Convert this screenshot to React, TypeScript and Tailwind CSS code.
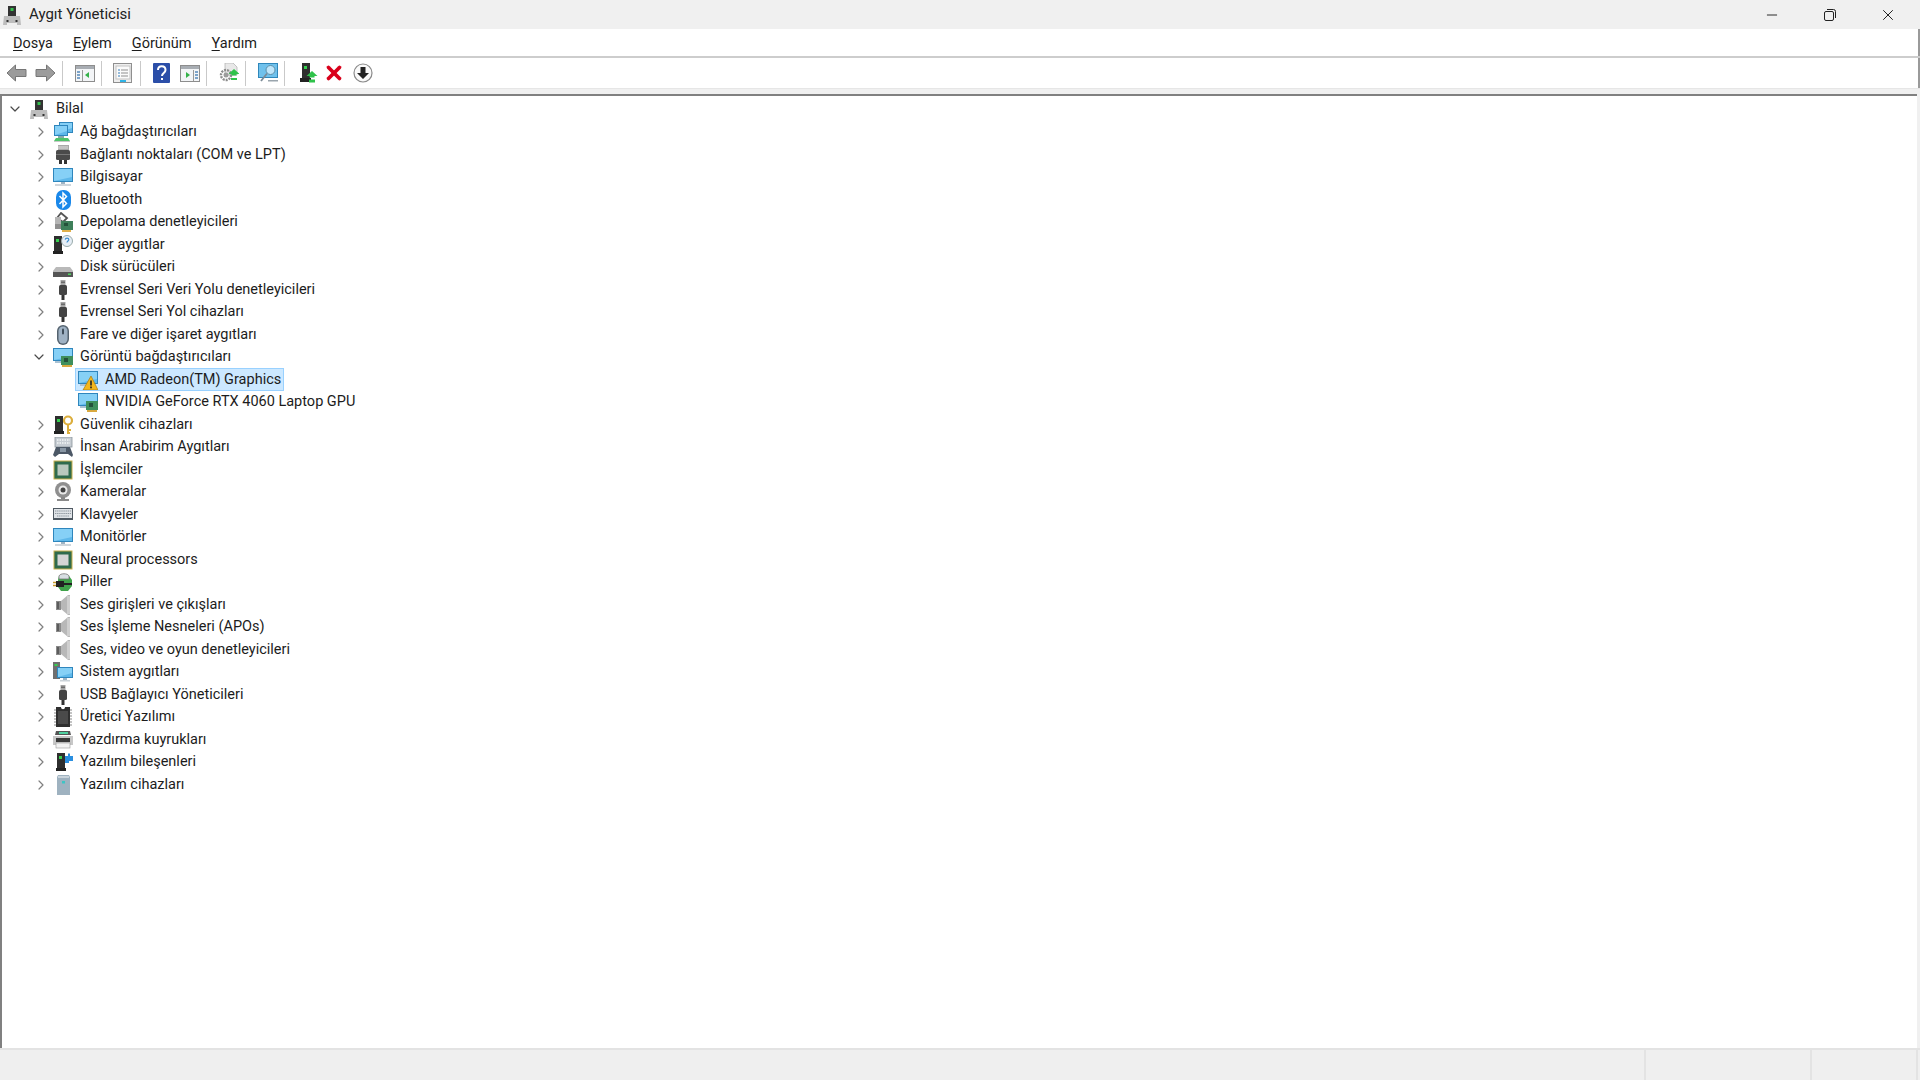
import React from 'react';
import { ChevronDown, ChevronRight, Minus, X } from 'lucide-react';

type Kind =
  | 'pc' | 'network' | 'port' | 'monitor' | 'bluetooth' | 'storage' | 'other' | 'disk' | 'usb' | 'mouse'
  | 'display' | 'displayWarn' | 'security' | 'hid' | 'cpu' | 'camera' | 'keyboard' | 'neural' | 'battery'
  | 'speaker' | 'system' | 'firmware' | 'printer' | 'softComp' | 'softDev';

type Row = { label: string; icon: Kind; open?: boolean; child?: boolean; selected?: boolean };

const rows: Row[] = [
  { label: 'Ağ bağdaştırıcıları', icon: 'network' },
  { label: 'Bağlantı noktaları (COM ve LPT)', icon: 'port' },
  { label: 'Bilgisayar', icon: 'monitor' },
  { label: 'Bluetooth', icon: 'bluetooth' },
  { label: 'Depolama denetleyicileri', icon: 'storage' },
  { label: 'Diğer aygıtlar', icon: 'other' },
  { label: 'Disk sürücüleri', icon: 'disk' },
  { label: 'Evrensel Seri Veri Yolu denetleyicileri', icon: 'usb' },
  { label: 'Evrensel Seri Yol cihazları', icon: 'usb' },
  { label: 'Fare ve diğer işaret aygıtları', icon: 'mouse' },
  { label: 'Görüntü bağdaştırıcıları', icon: 'display', open: true },
  { label: 'AMD Radeon(TM) Graphics', icon: 'displayWarn', child: true, selected: true },
  { label: 'NVIDIA GeForce RTX 4060 Laptop GPU', icon: 'display', child: true },
  { label: 'Güvenlik cihazları', icon: 'security' },
  { label: 'İnsan Arabirim Aygıtları', icon: 'hid' },
  { label: 'İşlemciler', icon: 'cpu' },
  { label: 'Kameralar', icon: 'camera' },
  { label: 'Klavyeler', icon: 'keyboard' },
  { label: 'Monitörler', icon: 'monitor' },
  { label: 'Neural processors', icon: 'neural' },
  { label: 'Piller', icon: 'battery' },
  { label: 'Ses girişleri ve çıkışları', icon: 'speaker' },
  { label: 'Ses İşleme Nesneleri (APOs)', icon: 'speaker' },
  { label: 'Ses, video ve oyun denetleyicileri', icon: 'speaker' },
  { label: 'Sistem aygıtları', icon: 'system' },
  { label: 'USB Bağlayıcı Yöneticileri', icon: 'usb' },
  { label: 'Üretici Yazılımı', icon: 'firmware' },
  { label: 'Yazdırma kuyrukları', icon: 'printer' },
  { label: 'Yazılım bileşenleri', icon: 'softComp' },
  { label: 'Yazılım cihazları', icon: 'softDev' },
];

const Screen = ({ x = 0, y = 0, w = 20, h = 14 }: { x?: number; y?: number; w?: number; h?: number }) => (
  <g>
    <rect x={x} y={y} width={w} height={h} fill="#2f86bd" />
    <rect x={x + 1} y={y + 1} width={w - 2} height={h - 2} fill="#86d0f6" />
    <path d={`M${x + 1} ${y + h - 1}h${w - 2}v-4z`} fill="#5fb8ea" />
  </g>
);

const Tower = ({ x = 4, w = 8, h = 15 }: { x?: number; w?: number; h?: number }) => (
  <g>
    <rect x={x} y={1} width={w} height={h} fill="#2e2e2e" />
    <rect x={x + 2} y={4} width={3} height={3} fill="#35d04f" />
    <path d={`M${x - 1} ${h + 1}h${w + 2}v3h-${w + 2}z`} fill="#222" />
  </g>
);

function DeviceIcon({ kind }: { kind: Kind }) {
  const body = () => {
    switch (kind) {
      case 'pc':
        return (
          <g>
            <rect x="6" y="1" width="8" height="10" fill="#333" />
            <rect x="8.500" y="3" width="3" height="3" fill="#35c04f" />
            <path d="M2 11h16l1 9H15v-2H5v2H1z" fill="#bdbdbd" />
            <rect x="4.500" y="15" width="2" height="2" fill="#333" />
            <rect x="13.500" y="15" width="2" height="2" fill="#333" />
          </g>
        );
      case 'network':
        return (
          <g>
            <Screen x={6} y={0} w={14} h={11} />
            <Screen x={1} y={3} w={14} h={11} />
            <rect x="5" y="14" width="6" height="2" fill="#8aa" />
            <path d="M3 16h12l2 3H1z" fill="#4fc36a" />
            <rect x="1" y="19" width="16" height="1" fill="#c8c8c8" />
          </g>
        );
      case 'port':
        return (
          <g>
            <rect x="5" y="0" width="11" height="5" fill="#a8a8a8" />
            <path d="M6 1v3M8 1v3M10 1v3M12 1v3M14 1v3" stroke="#eee" strokeWidth="0.800" />
            <rect x="3" y="5" width="14" height="10" rx="1.500" fill="#4a4a4a" />
            <rect x="3" y="9" width="14" height="1" fill="#777" />
            <rect x="6" y="15" width="3" height="4" fill="#333" />
            <rect x="11" y="15" width="3" height="4" fill="#333" />
          </g>
        );
      case 'monitor':
        return (
          <g>
            <Screen x={0} y={1} w={20} h={14} />
            <rect x="8" y="15" width="4" height="2" fill="#9fb4c4" />
            <rect x="2" y="17" width="16" height="2" fill="#cfd6dc" />
          </g>
        );
      case 'bluetooth':
        return (
          <g>
            <rect x="3" y="0" width="15" height="20" rx="7" fill="#1a88ea" />
            <path d="M6.500 6l7 7.500-3.500 3.500V3l3.500 3.500-7 7.500" fill="none" stroke="#fff" strokeWidth="1.500" />
          </g>
        );
      case 'storage':
        return (
          <g>
            <path d="M8 1l6 5-4 4-6-4z" fill="none" stroke="#555" strokeWidth="1.800" />
            <path d="M2 5h6v7H2z" fill="#b5b5b5" />
            <path d="M2 12h10v5H2z" fill="#8f8f8f" />
            <rect x="8" y="9" width="12" height="9" fill="#3e7f5a" />
            <rect x="11" y="11" width="4" height="3" fill="#24513a" />
            <rect x="9" y="18" width="9" height="2" fill="#e0b04a" />
          </g>
        );
      case 'other':
        return (
          <g>
            <Tower x={1} w={8} h={15} />
            <circle cx="14" cy="6" r="5.500" fill="#e6eef6" stroke="#9aa" strokeWidth="1" />
            <path d="M12.200 4.600c.3-2 3.600-2 3.600 0 0 1.400-1.800 1.400-1.800 3" fill="none" stroke="#3d8ed0" strokeWidth="1.200" />
          </g>
        );
      case 'disk':
        return (
          <g>
            <path d="M3 10h14l3 4v6H0v-6z" fill="#b9b9b9" />
            <rect x="0" y="15" width="20" height="5" fill="#555" />
            <rect x="15" y="16.500" width="3" height="1.500" fill="#4fd65f" />
          </g>
        );
      case 'usb':
        return (
          <g>
            <rect x="7.500" y="0" width="5" height="5" fill="#a5a5a5" />
            <rect x="8.500" y="1.500" width="1" height="1.500" fill="#333" />
            <rect x="10.500" y="1.500" width="1" height="1.500" fill="#333" />
            <rect x="6" y="5" width="8" height="10" rx="1.500" fill="#444" />
            <path d="M8.500 15h3v5h-3z" fill="#333" />
          </g>
        );
      case 'mouse':
        return (
          <g>
            <rect x="4" y="0" width="12" height="20" rx="6" fill="#55636f" />
            <rect x="5.500" y="1.500" width="9" height="17" rx="4.500" fill="#9fb2c4" />
            <rect x="9" y="3.500" width="2" height="6" rx="1" fill="#3f4d5a" />
          </g>
        );
      case 'display':
      case 'displayWarn':
        return (
          <g>
            <Screen x={0} y={1} w={20} h={13} />
            <rect x="2" y="14" width="13" height="2" fill="#a9c2d4" />
            {kind === 'display' ? (
              <g>
                <rect x="8" y="9" width="12" height="9" fill="#3f8f5c" />
                <rect x="11" y="11" width="4" height="4" fill="#24513a" />
                <rect x="9" y="18" width="10" height="2" fill="#d9a93f" />
              </g>
            ) : (
              <g>
                <path d="M13 6l7 14H5z" fill="#f4b71c" stroke="#a87a10" strokeWidth="0.700" />
                <rect x="12.200" y="10.500" width="1.600" height="5" fill="#222" />
                <rect x="12.200" y="16.500" width="1.600" height="1.800" fill="#222" />
              </g>
            )}
          </g>
        );
      case 'security':
        return (
          <g>
            <Tower x={2} w={8} h={15} />
            <circle cx="15" cy="5.500" r="4" fill="none" stroke="#dcae3c" strokeWidth="2.200" />
            <path d="M15 9v10M15 15h3M15 18h2" stroke="#dcae3c" strokeWidth="2" />
          </g>
        );
      case 'hid':
        return (
          <g>
            <rect x="2" y="0" width="17" height="10" fill="#c7cdd3" stroke="#8a939b" strokeWidth="0.800" />
            <path d="M4 3h13M4 6h13" stroke="#f3f6f8" strokeWidth="1.300" strokeDasharray="1.500 1" />
            <path d="M3 10h14l3 8-1 2-4-3H6l-4 3-2-2z" fill="#4c5866" />
            <rect x="7" y="11" width="6" height="4" fill="#8896a4" />
          </g>
        );
      case 'cpu':
      case 'neural':
        return (
          <g>
            <rect x="0.500" y="0.500" width="19" height="19" fill="#c9b04d" />
            <rect x="1.500" y="1.500" width="17" height="17" fill="#2f6b4d" />
            <rect x="4.500" y="4.500" width="11" height="11" fill={kind === 'cpu' ? '#b9c8bd' : '#d5d5d5'} />
          </g>
        );
      case 'camera':
        return (
          <g>
            <circle cx="10" cy="8" r="8" fill="#8f8f8f" />
            <circle cx="10" cy="8" r="4.500" fill="#e9e9e9" />
            <circle cx="10" cy="8" r="2.500" fill="#444" />
            <rect x="8" y="15" width="4" height="2" fill="#888" />
            <rect x="4" y="17" width="12" height="2" fill="#8a8a8a" />
          </g>
        );
      case 'keyboard':
        return (
          <g>
            <rect x="0" y="3" width="20" height="12" fill="#4f5962" />
            <rect x="1" y="4" width="18" height="9" fill="#dfe3e7" />
            <path d="M2 6h16M2 8.500h16M4 11h12" stroke="#8d969e" strokeWidth="1.200" strokeDasharray="1.400 .7" />
          </g>
        );
      case 'battery':
        return (
          <g>
            <path d="M6 4h10l3 4v6l-4 5H8l-3-4V8z" fill="#3fa34a" />
            <path d="M6 4c1-3 9-3 10 0v3H6z" fill="#d8dfe3" stroke="#777" strokeWidth="0.800" />
            <rect x="3" y="9" width="8" height="6" fill="#222" />
            <path d="M0 10.500h3M0 13.500h3" stroke="#c49a2e" strokeWidth="1.400" />
            <rect x="11" y="11" width="8" height="2" fill="#222" />
          </g>
        );
      case 'speaker':
        return (
          <g>
            <rect x="3" y="6" width="5" height="9" fill="#8a8a8a" />
            <path d="M8 6l7-6h2v20h-2l-7-6z" fill="#b8b8b8" />
            <path d="M14 1h3v18h-3z" fill="#cfcfcf" />
            <path d="M4 7h2v7H4z" fill="#5c5c5c" />
          </g>
        );
      case 'system':
        return (
          <g>
            <rect x="0" y="0" width="7" height="17" fill="#6f6f6f" />
            <rect x="1.500" y="2" width="3" height="2" fill="#35d04f" />
            <Screen x={4} y={5} w={16} h={11} />
            <rect x="10" y="16" width="4" height="2" fill="#9fb4c4" />
            <rect x="7" y="18" width="10" height="1.500" fill="#ccd4da" />
          </g>
        );
      case 'firmware':
        return (
          <g>
            <path d="M3 0h5c0 3 4 3 4 0h5v20H3z" fill="#2f2f2f" />
            <path d="M1 3h2M1 6h2M1 9h2M1 12h2M1 15h2M1 18h2M17 3h2M17 6h2M17 9h2M17 12h2M17 15h2M17 18h2" stroke="#888" strokeWidth="1.200" />
            <rect x="5" y="4" width="10" height="13" fill="#4a4a4a" />
          </g>
        );
      case 'printer':
        return (
          <g>
            <path d="M3 1h14l1 4H2z" fill="#555" />
            <rect x="6" y="2" width="9" height="2" fill="#4fd0a0" />
            <rect x="0" y="6" width="20" height="9" fill="#c7c7c7" />
            <rect x="3" y="8" width="14" height="4" fill="#3a3a3a" />
            <rect x="3" y="13" width="14" height="5" fill="#f3f3f3" stroke="#999" strokeWidth="0.600" />
          </g>
        );
      case 'softComp':
        return (
          <g>
            <Tower x={4} w={8} h={15} />
            <path d="M12 4h3V1.500h2V4h3v5h-4v2h-4z" fill="#2a8fe0" />
          </g>
        );
      case 'softDev':
        return (
          <g>
            <path d="M5 0h11l1 2v18H4V2z" fill="#9fb2c0" />
            <rect x="5" y="1" width="11" height="2" fill="#c9d4dc" />
            <rect x="9" y="6" width="3" height="2.500" fill="#3cc5c5" />
          </g>
        );
    }
  };
  return (
    <svg viewBox="0 0 20 20" className="w-5 h-5 shrink-0">
      {body()}
    </svg>
  );
}

function TreeRow({ row }: { row: Row }) {
  if (row.child) {
    return (
      <div className="h-[22.5px] flex items-center pl-[73px]">
        <div
          className={`flex items-center h-[23px] pl-[2px] pr-[2px] border ${
            row.selected ? 'bg-[#cce8ff] border-[#99d1ff]' : 'border-transparent'
          }`}
        >
          <DeviceIcon kind={row.icon} />
          <span className="ml-[7px] whitespace-nowrap">{row.label}</span>
        </div>
      </div>
    );
  }
  return (
    <div className="h-[22.5px] flex items-center">
      <div className="w-[51px] flex justify-end pr-[4px]">
        {row.open ? (
          <ChevronDown size={16} strokeWidth={1.8} className="text-[#4a4a4a] mr-[2px]" />
        ) : (
          <ChevronRight size={16} strokeWidth={1.8} className="text-[#808080]" />
        )}
      </div>
      <DeviceIcon kind={row.icon} />
      <span className="ml-[7px] whitespace-nowrap">{row.label}</span>
    </div>
  );
}

function Menu({ hot, rest, className }: { hot: string; rest: string; className: string }) {
  return (
    <span className={className}>
      <span className="underline underline-offset-2 decoration-1">{hot}</span>
      {rest}
    </span>
  );
}

const Sep = ({ className }: { className: string }) => <div className={`w-px h-[25px] bg-[#c9c9c9] ${className}`} />;

function Arrow({ right }: { right?: boolean }) {
  return (
    <svg viewBox="0 0 21 18" className={`w-[21px] h-[18px] shrink-0 ${right ? '-scale-x-100' : ''}`}>
      <path d="M9.500 1L1 9l8.500 8v-4.500H20v-7H9.500z" fill="#9c9c9c" stroke="#767676" strokeWidth="1" />
    </svg>
  );
}

function PanelIcon({ right }: { right?: boolean }) {
  return (
    <svg viewBox="0 0 20 17" className="w-5 h-[17px] shrink-0">
      <rect x="0.500" y="0.500" width="19" height="16" fill="#f3f5f7" stroke="#8d8d8d" />
      <rect x="1" y="1" width="18" height="3" fill="#a8adb3" />
      {right ? (
        <g>
          <path d="M6 7l4 3-4 3z" fill="#35b24a" />
          <rect x="13" y="5" width="1" height="11" fill="#999" />
          <path d="M15 7h3M15 10h3M15 13h3" stroke="#5588bb" strokeWidth="1.400" />
        </g>
      ) : (
        <g>
          <path d="M14 7l-4 3 4 3z" fill="#35b24a" />
          <rect x="7" y="5" width="1" height="11" fill="#999" />
          <path d="M2 7h3M2 10h3M2 13h3" stroke="#5588bb" strokeWidth="1.400" />
        </g>
      )}
    </svg>
  );
}

const UpArrow = ({ x, y }: { x: number; y: number }) => (
  <path d={`M${x} ${y}l5.500 5h-3v1.500h-5V${y + 5}h-3z`} fill="#2fc24a" />
);

function Toolbar() {
  return (
    <div className="h-[30px] bg-white flex items-center pl-[6px] border-r-2 border-[#9a9a9a]">
      <Arrow />
      <div className="ml-2"><Arrow right /></div>
      <Sep className="ml-[6px]" />
      <div className="ml-3"><PanelIcon /></div>
      <Sep className="ml-[6px]" />
      <svg viewBox="0 0 20 20" className="w-5 h-5 ml-[11px] shrink-0">
        <rect x="0.500" y="0.500" width="18" height="19" fill="#eeeeee" stroke="#8f8f8f" />
        <rect x="3" y="3" width="14" height="13" fill="#fafafa" stroke="#c2c2c2" />
        <path d="M5 7h2M5 10h2M5 13h2" stroke="#76a6cf" strokeWidth="1.300" />
        <path d="M8 7h7M8 10h7M8 13h7" stroke="#8e8e8e" strokeWidth="1.100" />
        <rect x="7" y="17" width="6" height="2" fill="#2fb3e6" />
      </svg>
      <Sep className="ml-[7px]" />
      <svg viewBox="0 0 17 20" className="w-[17px] h-5 ml-[12px] shrink-0">
        <rect width="17" height="20" rx="1" fill="#2b4ea8" />
        <path d="M5 7c0-5 7.500-5 7.500 0 0 3-3.500 3-3.500 6" fill="none" stroke="#fff" strokeWidth="2" />
        <rect x="8" y="15" width="2" height="2" fill="#fff" />
      </svg>
      <div className="ml-[10px]"><PanelIcon right /></div>
      <Sep className="ml-[6px]" />
      <svg viewBox="0 0 20 20" className="w-5 h-5 ml-3 shrink-0">
        <path d="M6 0h8l4 4v8H6z" fill="#e8e8e8" stroke="#b5b5b5" strokeWidth="0.800" />
        <circle cx="7" cy="12" r="5" fill="none" stroke="#8c8c8c" strokeWidth="2.400" strokeDasharray="2 1" />
        <circle cx="7" cy="12" r="2.500" fill="#9c9c9c" />
        <UpArrow x={15} y={6} />
        <rect x="12" y="15" width="6" height="2" fill="#2fc24a" />
      </svg>
      <Sep className="ml-[6px]" />
      <svg viewBox="0 0 20 20" className="w-5 h-5 ml-3 shrink-0">
        <rect x="0.500" y="0.500" width="19" height="14" fill="#6fc1ec" stroke="#2f87bb" />
        <circle cx="12.500" cy="7" r="4.500" fill="#bfe6fb" stroke="#5b8ea8" />
        <path d="M9 10.500L3 18" stroke="#7a8a96" strokeWidth="1.800" />
        <rect x="10" y="17" width="10" height="1.500" fill="#9aa5ad" />
      </svg>
      <Sep className="ml-[6px]" />
      <svg viewBox="0 0 18 20" className="w-[18px] h-5 ml-[15px] shrink-0">
        <rect x="2" y="0" width="8" height="15" fill="#2e2e2e" />
        <rect x="4" y="3" width="3" height="3" fill="#35d04f" />
        <rect x="0" y="15" width="11" height="4" fill="#222" />
        <UpArrow x={12} y={8} />
        <rect x="9" y="16.500" width="6" height="3" fill="#2fc24a" />
      </svg>
      <X size={22} strokeWidth={4} className="ml-[5px] text-[#d9001b] shrink-0" />
      <svg viewBox="0 0 20 20" className="w-5 h-5 ml-[8px] shrink-0">
        <circle cx="10" cy="10" r="9" fill="#fafafa" stroke="#8a8a8a" strokeWidth="1.200" />
        <path d="M7.500 4h5v6H16l-6 6-6-6h3.500z" fill="#222" />
      </svg>
    </div>
  );
}

export default function App() {
  return (
    <div className="h-screen w-full flex flex-col overflow-hidden bg-[#f0f0f0] text-[14.5px] text-[#1c1c1c] font-['Roboto','Noto_Sans',sans-serif]">
      {/* title bar */}
      <div className="h-[29px] flex items-center pl-[2px] shrink-0">
        <DeviceIcon kind="pc" />
        <span className="ml-[7px] text-[15px] text-[#222]">Aygıt Yöneticisi</span>
        <div className="ml-auto flex items-center pr-[3px]">
          <div className="w-[58px] flex justify-center"><Minus size={16} strokeWidth={1.4} /></div>
          <div className="w-[58px] flex justify-center">
            <svg viewBox="0 0 12 12" className="w-3 h-3" fill="none" stroke="#222" strokeWidth="1">
              <rect x="0.500" y="2.500" width="9" height="9" rx="1.500" />
              <path d="M3 .5h6.500a2 2 0 0 1 2 2V9" />
            </svg>
          </div>
          <div className="w-[58px] flex justify-center"><X size={18} strokeWidth={1.3} /></div>
        </div>
      </div>

      {/* menu */}
      <div className="h-[27px] bg-white flex items-center pt-[2px] shrink-0 border-r-2 border-[#9a9a9a]">
        <Menu hot="D" rest="osya" className="ml-[13px]" />
        <Menu hot="E" rest="ylem" className="ml-5" />
        <Menu hot="G" rest="örünüm" className="ml-5" />
        <Menu hot="Y" rest="ardım" className="ml-5" />
      </div>
      <div className="h-[2px] bg-[#cdcdcd] shrink-0" />
      <Toolbar />
      <div className="h-[6px] shrink-0 border-t border-[#e6e6e6]" />

      {/* device tree */}
      <div className="flex-1 min-h-0 bg-white border-t-2 border-l-2 border-[#808080] mr-[3px] pt-px">
        <div className="h-[24px] flex items-center">
          <div className="w-[27px] flex justify-end pr-[6px]">
            <ChevronDown size={16} strokeWidth={1.8} className="text-[#4a4a4a]" />
          </div>
          <DeviceIcon kind="pc" />
          <span className="ml-[7px]">Bilal</span>
        </div>
        {rows.map((row) => (
          <TreeRow key={row.label} row={row} />
        ))}
      </div>

      {/* status bar */}
      <div className="h-[32px] shrink-0 flex bg-[#efefef] border-t-2 border-[#e3e3e3]">
        <div className="flex-1 border-r-2 border-[#e3e3e3]" />
        <div className="w-[166px] border-r-2 border-[#e3e3e3]" />
        <div className="w-[106px] border-r-2 border-[#e3e3e3] mr-[2px]" />
      </div>
    </div>
  );
}
